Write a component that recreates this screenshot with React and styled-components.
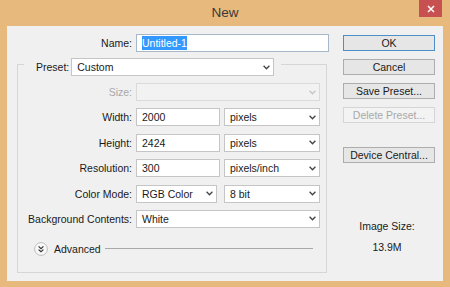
import React from "react";
import styled, { createGlobalStyle } from "styled-components";

const Global = createGlobalStyle`
  html, body {
    margin: 0;
    padding: 0;
  }
  body {
    width: 450px;
    height: 287px;
    overflow: hidden;
    background: #e7b97d;
    font-family: "Liberation Sans", Arial, sans-serif;
    font-size: 10.5px;
    color: #1a1a1a;
  }
`;

const Window = styled.div`
  width: 450px;
  height: 287px;
  box-sizing: border-box;
  background: #e7b97d;
  padding: 0 7px 6px;
  display: flex;
  flex-direction: column;
`;

const TitleBar = styled.div`
  height: 26px;
  flex: none;
  display: grid;
  grid-template-columns: 1fr auto 1fr;
  align-items: start;
`;

const Title = styled.div`
  grid-column: 2;
  font-size: 13.5px;
  line-height: 25px;
  color: #3a3a3a;
`;

const Close = styled.div`
  grid-column: 3;
  justify-self: end;
  margin-right: 1px;
  width: 23px;
  height: 17px;
  background: #c75050;
  display: flex;
  align-items: center;
  justify-content: center;
`;

const Client = styled.div`
  flex: 1;
  background: #f0f0f0;
  display: flex;
  gap: 14px;
  padding-top: 8px;
`;

const LeftPane = styled.div`
  width: 322px;
  display: flex;
  flex-direction: column;
`;

const NameRow = styled.div`
  display: grid;
  grid-template-columns: 125px 193px;
  column-gap: 4px;
  align-items: center;
`;

const Row = styled.div`
  display: grid;
  grid-template-columns: 114px auto;
  column-gap: 4px;
  align-items: center;
`;

const Label = styled.div`
  text-align: right;
  white-space: nowrap;
  color: ${(p) => (p.$disabled ? "#a8a8a8" : "#1a1a1a")};
`;

const Fields = styled.div`
  display: flex;
  gap: ${(p) => p.$gap || 4}px;
`;

const TextBox = styled.div`
  box-sizing: border-box;
  width: ${(p) => p.$w}px;
  height: 18px;
  background: #fff;
  border: 1px solid ${(p) => (p.$focus ? "#a9b8c9" : "#c5c5c5")};
  padding: 0 5px;
  display: flex;
  align-items: center;
  white-space: nowrap;
`;

const Selected = styled.span`
  background: #3399ff;
  color: #fff;
  padding: 1px 0;
`;

const ComboBox = styled.div`
  box-sizing: border-box;
  width: ${(p) => p.$w}px;
  height: 18px;
  background: ${(p) => (p.$disabled ? "#f2f2f2" : "#fff")};
  border: 1px solid ${(p) => (p.$disabled ? "#dadada" : "#c5c5c5")};
  padding: 0 3px 0 5px;
  display: flex;
  align-items: center;
  justify-content: space-between;
  white-space: nowrap;
`;

const GroupBox = styled.fieldset`
  box-sizing: border-box;
  width: 310px;
  margin: 1px 0 0 10px;
  padding: 0 0 16px 0;
  border: 1px solid #d6d6d6;
  min-inline-size: 0;
`;

const Legend = styled.legend`
  margin-left: 6px;
  padding: 5px 7px 0 12px;
`;

const LegendInner = styled.div`
  display: flex;
  align-items: center;
  gap: 2px;
`;

const Rows = styled.div`
  display: flex;
  flex-direction: column;
  gap: 7.4px;
  padding-top: 7px;
`;

const AdvancedRow = styled.div`
  display: flex;
  align-items: center;
  height: 14px;
  margin-top: 14px;
  padding: 0 13px 0 16px;
  gap: 6px;
`;

const Rule = styled.div`
  flex: 1;
  height: 1px;
  margin-left: -2px;
  background: #a9a9a9;
`;

const RightPane = styled.div`
  width: 92px;
  display: flex;
  flex-direction: column;
  gap: 8px;
  padding-top: 1px;
`;

const Button = styled.div`
  box-sizing: border-box;
  height: 16px;
  display: flex;
  align-items: center;
  justify-content: center;
  background: ${(p) => (p.$disabled ? "#f3f3f3" : "#e6e6e6")};
  border: 1px solid
    ${(p) => (p.$default ? "#4d8fc7" : p.$disabled ? "#d5d5d5" : "#adadad")};
  color: ${(p) => (p.$disabled ? "#a8a8a8" : "#1a1a1a")};
  margin-top: ${(p) => p.$top || 0}px;
  white-space: nowrap;
`;

const SizeInfo = styled.div`
  margin-top: ${(p) => p.$top}px;
  text-align: center;
  line-height: 13px;
  margin-left: -4px;
`;

const Chevron = ({ disabled }) => (
  <svg width="7" height="5" viewBox="0 0 7 5">
    <polyline
      points="0.6,0.8 3.5,3.8 6.4,0.8"
      fill="none"
      stroke={disabled ? "#c4c4c4" : "#444"}
      strokeWidth="1.3"
    />
  </svg>
);

const Combo = ({ w, disabled, children }) => (
  <ComboBox $w={w} $disabled={disabled}>
    <span>{children}</span>
    <Chevron disabled={disabled} />
  </ComboBox>
);

const AdvancedIcon = () => (
  <svg width="14" height="14" viewBox="0 0 14 14">
    <circle cx="7" cy="7" r="6.4" fill="#f8f8f8" stroke="#bdbdbd" />
    <polyline points="4.6,4.4 7,6.6 9.4,4.4" fill="none" stroke="#333" strokeWidth="1.2" />
    <polyline points="4.6,7.6 7,9.8 9.4,7.6" fill="none" stroke="#333" strokeWidth="1.2" />
  </svg>
);

export default function App() {
  return (
    <Window>
      <Global />
      <TitleBar>
        <Title>New</Title>
        <Close>
          <svg width="8" height="8" viewBox="0 0 8 8">
            <path d="M1 1 L7 7 M7 1 L1 7" stroke="#fff" strokeWidth="1.5" />
          </svg>
        </Close>
      </TitleBar>
      <Client>
        <LeftPane>
          <NameRow>
            <Label>Name:</Label>
            <TextBox $w={193} $focus>
              <Selected>Untitled-1</Selected>
            </TextBox>
          </NameRow>
          <GroupBox>
            <Legend>
              <LegendInner>
                <Label>Preset:</Label>
                <Combo w={203}>Custom</Combo>
              </LegendInner>
            </Legend>
            <Rows>
              <Row>
                <Label $disabled>Size:</Label>
                <Combo w={184} disabled />
              </Row>
              <Row>
                <Label>Width:</Label>
                <Fields>
                  <TextBox $w={84}>2000</TextBox>
                  <Combo w={96}>pixels</Combo>
                </Fields>
              </Row>
              <Row>
                <Label>Height:</Label>
                <Fields>
                  <TextBox $w={84}>2424</TextBox>
                  <Combo w={96}>pixels</Combo>
                </Fields>
              </Row>
              <Row>
                <Label>Resolution:</Label>
                <Fields>
                  <TextBox $w={84}>300</TextBox>
                  <Combo w={96}>pixels/inch</Combo>
                </Fields>
              </Row>
              <Row>
                <Label>Color Mode:</Label>
                <Fields $gap={7}>
                  <Combo w={81}>RGB Color</Combo>
                  <Combo w={96}>8 bit</Combo>
                </Fields>
              </Row>
              <Row>
                <Label>Background Contents:</Label>
                <Combo w={184}>White</Combo>
              </Row>
            </Rows>
            <AdvancedRow>
              <AdvancedIcon />
              <span>Advanced</span>
              <Rule />
            </AdvancedRow>
          </GroupBox>
        </LeftPane>
        <RightPane>
          <Button $default>OK</Button>
          <Button>Cancel</Button>
          <Button>Save Preset...</Button>
          <Button $disabled>Delete Preset...</Button>
          <Button $top={16}>Device Central...</Button>
          <SizeInfo $top={49}>Image Size:</SizeInfo>
          <SizeInfo $top={0}>13.9M</SizeInfo>
        </RightPane>
      </Client>
    </Window>
  );
}
